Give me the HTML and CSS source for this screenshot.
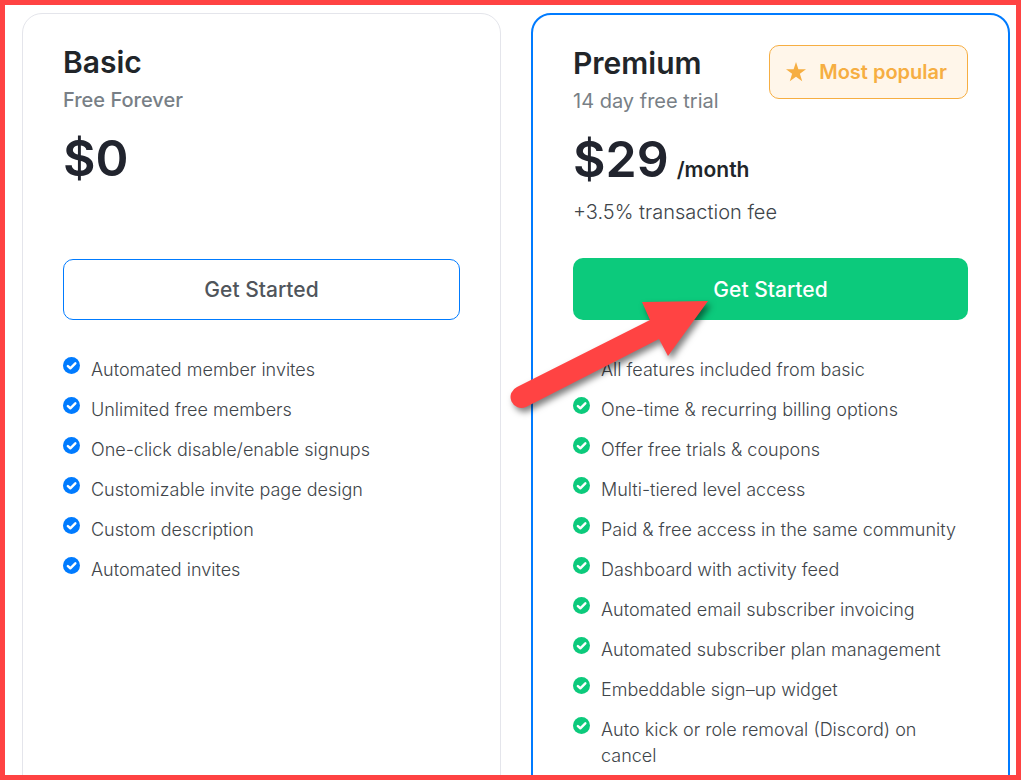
FILE: index.html
```html
<!DOCTYPE html>
<html lang="en">
<head>
    <meta charset="UTF-8">
    <meta name="viewport" content="width=device-width, initial-scale=1.0">
    <title>Pricing</title>
    <link rel="stylesheet" href="styles.css">
</head>
<body>
    <svg class="icon-defs" aria-hidden="true">
        <symbol id="check" viewBox="0 0 16 16">
            <circle cx="8" cy="8" r="8" fill="currentColor"/>
            <path d="M4.6 8.6 6.9 10.6l4.7-4.6" fill="none" stroke="#fff" stroke-width="2.3" stroke-linecap="round" stroke-linejoin="round"/>
        </symbol>
    </svg>

    <main class="plans">
        <section class="card basic">
            <div class="summary">
                <h2>Basic</h2>
                <p class="subtitle bold">Free Forever</p>
                <p class="price">$0</p>
            </div>
            <button class="cta outline" type="button">Get Started</button>
            <ul class="features">
                <li><svg class="check"><use href="#check"/></svg>Automated member invites</li>
                <li><svg class="check"><use href="#check"/></svg>Unlimited free members</li>
                <li><svg class="check"><use href="#check"/></svg>One-click disable/enable signups</li>
                <li><svg class="check"><use href="#check"/></svg>Customizable invite page design</li>
                <li><svg class="check"><use href="#check"/></svg>Custom description</li>
                <li><svg class="check"><use href="#check"/></svg>Automated invites</li>
            </ul>
        </section>

        <section class="card premium">
            <div class="summary">
                <div class="heading">
                    <div>
                        <h2>Premium</h2>
                        <p class="subtitle">14 day free trial</p>
                    </div>
                    <div class="badge">
                        <svg class="star" viewBox="0 0 20 20" aria-hidden="true"><path fill="currentColor" d="M10 0l2.4 7.2H20l-6.1 4.5 2.3 7.5L10 14.8l-6.2 4.4 2.3-7.5L0 7.2h7.6z"/></svg>
                        <span>Most popular</span>
                    </div>
                </div>
                <p class="price">$29 <span class="period">/month</span></p>
                <p class="fee">+3.5% transaction fee</p>
            </div>
            <button class="cta solid" type="button">Get Started</button>
            <ul class="features">
                <li><svg class="check"><use href="#check"/></svg>All features included from basic</li>
                <li><svg class="check"><use href="#check"/></svg>One-time &amp; recurring billing options</li>
                <li><svg class="check"><use href="#check"/></svg>Offer free trials &amp; coupons</li>
                <li><svg class="check"><use href="#check"/></svg>Multi-tiered level access</li>
                <li><svg class="check"><use href="#check"/></svg>Paid &amp; free access in the same community</li>
                <li><svg class="check"><use href="#check"/></svg>Dashboard with activity feed</li>
                <li><svg class="check"><use href="#check"/></svg>Automated email subscriber invoicing</li>
                <li><svg class="check"><use href="#check"/></svg>Automated subscriber plan management</li>
                <li><svg class="check"><use href="#check"/></svg>Embeddable sign–up widget</li>
                <li><svg class="check"><use href="#check"/></svg>Auto kick or role removal (Discord) on cancel</li>
            </ul>
            <svg class="arrow" viewBox="0 0 200 112" aria-hidden="true">
                <path fill="#ff4343" d="M199 1 133 2l8 18L8 87a10 10 0 0 0 9 20l133-68 9 17z"/>
            </svg>
        </section>
    </main>
</body>
</html>
```
FILE: styles.css
```css
* { box-sizing: border-box; }
body {
    margin: 0;
    height: 100vh;
    overflow: hidden;
    border: 5px solid #ff4343;
    background: #fff;
    color: #212529;
    font-family: Inter, sans-serif;
}
h2, p, ul { margin: 0; padding: 0; }
.icon-defs { display: none; }

.plans {
    display: grid;
    grid-template-columns: 1fr 1fr;
    gap: 30px;
    padding: 8px 6px 0 17px;
}
.card {
    position: relative;
    padding: 28px 40px 40px;
    border: 1px solid #e4e5eb;
    border-radius: 20px;
}
.premium { border: 2px solid #007bff; }

.summary { height: 217px; }
.premium .summary { height: 215px; }
.heading { display: flex; justify-content: space-between; align-items: flex-start; }
h2 { font-size: 30px; line-height: 40px; font-weight: 600; }
.subtitle { font-size: 20px; line-height: 36px; color: #787f86; }
.bold { font-weight: 500; }
.price {
    display: flex;
    align-items: baseline;
    gap: 8px;
    margin: 10px 0;
    font-size: 50px;
    line-height: 60px;
    font-weight: 600;
    color: #21242e;
}
.period { font-size: 21px; line-height: 20px; color: #212529; }
.fee { font-size: 20px; line-height: 26px; font-weight: 300; color: #40454a; }

.badge {
    display: flex;
    align-items: center;
    gap: 13px;
    height: 54px;
    margin-top: 2px;
    padding: 0 20px 0 16px;
    border: 1px solid #f6ae42;
    border-radius: 10px;
    background: #fff6ea;
    color: #f6ae42;
    font-size: 20px;
    font-weight: 600;
}
.star { width: 20px; height: 20px; }

.cta {
    display: block;
    width: 100%;
    height: 62px;
    border-radius: 10px;
    font-family: inherit;
    font-size: 21px;
    font-weight: 500;
    cursor: pointer;
}
.outline { height: 61px; border: 1px solid #007bff; background: #fff; color: #50555b; }
.solid { border: 0; background: #0cca7c; color: #fff; }

.features {
    display: flex;
    flex-direction: column;
    gap: 14px;
    margin-top: 37px;
    list-style: none;
}
.features li { display: flex; gap: 11px; font-size: 18px; line-height: 26px; font-weight: 300; color: #40454a; }
.check { flex: none; width: 17px; height: 17px; color: #007bff; }
.premium .check { color: #0cca7c; }

/* pointer over the call to action */
.arrow {
    position: absolute;
    top: 285px;
    left: -24px;
    width: 200px;
    height: 112px;
    overflow: visible;
    filter: drop-shadow(3px 4px 3px rgba(0, 0, 0, 0.5));
}
```
